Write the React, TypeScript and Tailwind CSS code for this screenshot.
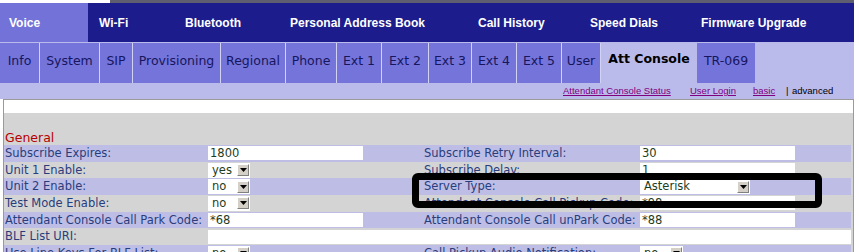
import React from 'react'

const navItems = [
    { label: 'Voice', cls: 'w-[88px] pl-[9px] bg-[#7272d8]' },
    { label: 'Wi-Fi', cls: 'w-[97px] pl-[11px]' },
    { label: 'Bluetooth', cls: 'w-[105px]' },
    { label: 'Personal Address Book', cls: 'w-[188px]' },
    { label: 'Call History', cls: 'w-[112px]' },
    { label: 'Speed Dials', cls: 'w-[111px]' },
    { label: 'Firmware Upgrade', cls: 'flex-1' },
]

const subTabs = [
    { label: 'Info', cls: 'w-[40px]' },
    { label: 'System', cls: 'w-[60px]' },
    { label: 'SIP', cls: 'w-[33px]' },
    { label: 'Provisioning', cls: 'w-[88px]' },
    { label: 'Regional', cls: 'w-[65px]' },
    { label: 'Phone', cls: 'w-[51px]' },
    { label: 'Ext 1', cls: 'w-[45px]' },
    { label: 'Ext 2', cls: 'w-[47px]' },
    { label: 'Ext 3', cls: 'w-[43px]' },
    { label: 'Ext 4', cls: 'w-[45px]' },
    { label: 'Ext 5', cls: 'w-[45px]' },
    { label: 'User', cls: 'w-[39px]' },
]

const DropBtn = () => (
    <div className="w-[12px] h-[12px] bg-[#d4d0c8] border-t border-l border-t-white border-l-white border-b border-r border-b-[#808080] border-r-[#808080] flex items-center justify-center">
        <svg width="7" height="4" viewBox="0 0 7 4">
            <path d="M0 0h7L3.5 4z" fill="#000" />
        </svg>
    </div>
)

const Select = ({ value, width }: { value: string; width: string }) => (
    <div className={`${width} h-[15px] bg-white flex items-center justify-between pl-[4px] pr-[1px] text-[#1e3c1e]`}>
        <span>{value}</span>
        <DropBtn />
    </div>
)

const Field = ({ value, wide }: { value: string; wide?: boolean }) => (
    <div className={`${wide ? 'w-full' : 'w-[155px]'} h-[14px] bg-white pl-[2px] leading-[14px] text-[#1e3c1e]`}>
        {value}
    </div>
)

const Row = ({ odd, children }: { odd: boolean; children: React.ReactNode }) => (
    <div className={`grid grid-cols-[204px_213px_219px_1fr] h-[16.7px] items-center leading-[16.7px] ${odd ? 'bg-[#bdbde6]' : ''}`}>
        {children}
    </div>
)

const Label = ({ children, right }: { children: React.ReactNode; right?: boolean }) => (
    <div className={`${right ? 'pl-[3px]' : 'pl-[1px]'} whitespace-nowrap text-[#293d7d]`}>{children}</div>
)

export default function App() {
    return (
        <div className="relative w-[859px] h-[252px] overflow-hidden bg-white font-['DejaVu_Sans',Verdana,sans-serif]">
            <div className="w-[854px]">
                <div className="flex h-[3px]">
                    <div className="w-[110px] bg-white" />
                    <div className="flex-1 bg-[#5e5e70]" />
                </div>

                <div className="flex h-[39px] bg-[#1c1c8c] text-white font-bold text-[12px] font-['Liberation_Sans',Arial,sans-serif]">
                    {navItems.map((n) => (
                        <div key={n.label} className={`${n.cls} h-full flex items-center whitespace-nowrap`}>
                            {n.label}
                        </div>
                    ))}
                </div>

                <div className="bg-[#bbbbeb] pt-[1px]">
                    <div className="flex h-[40px] text-[12.5px] text-[#16165e]">
                        {subTabs.map((t) => (
                            <div key={t.label} className={`${t.cls} h-full bg-[#7474da] border-r border-r-[#d2d2f4] flex items-center justify-center pb-[4px] whitespace-nowrap`}>
                                {t.label}
                            </div>
                        ))}
                        <div className="w-[96px] h-full flex items-center justify-center pb-[8px] font-bold text-black whitespace-nowrap">
                            Att Console
                        </div>
                        <div className="w-[58px] h-full bg-[#7474da] flex items-center justify-center pb-[4px]">TR-069</div>
                    </div>
                    <div className="flex h-[16px] items-center text-[9.5px] font-['Liberation_Sans',Arial,sans-serif] pl-[563px]">
                        <a className="w-[127px] text-[#80007f] underline">Attendant Console Status</a>
                        <a className="w-[63px] text-[#80007f] underline">User Login</a>
                        <a className="w-[33px] text-[#80007f] underline">basic</a>
                        <span className="w-[6px] text-black">|</span>
                        <span className="text-black">advanced</span>
                    </div>
                </div>

                <div className="ml-[3px] w-[851px] border-t border-l border-r border-[#9a9a9a]">
                    <div className="h-[13px] bg-white" />
                    <div className="bg-[#d4d4d4] pr-[2px] text-[11.5px]">
                        <div className="h-[32px] pt-[17px] pl-[1px] leading-[15px] text-[12.5px] text-[#b40000]">General</div>

                        <Row odd>
                            <Label>Subscribe Expires:</Label>
                            <Field value="1800" />
                            <Label right>Subscribe Retry Interval:</Label>
                            <Field value="30" />
                        </Row>
                        <Row odd={false}>
                            <Label>Unit 1 Enable:</Label>
                            <Select value="yes" width="w-[42px]" />
                            <Label right>Subscribe Delay:</Label>
                            <Field value="1" />
                        </Row>
                        <Row odd>
                            <Label>Unit 2 Enable:</Label>
                            <Select value="no" width="w-[42px]" />
                            <Label right>Server Type:</Label>
                            <Select value="Asterisk" width="w-[110px]" />
                        </Row>
                        <Row odd={false}>
                            <Label>Test Mode Enable:</Label>
                            <Select value="no" width="w-[42px]" />
                            <Label right>Attendant Console Call Pickup Code:</Label>
                            <Field value="*98" />
                        </Row>
                        <Row odd>
                            <Label>Attendant Console Call Park Code:</Label>
                            <Field value="*68" />
                            <Label right>Attendant Console Call unPark Code:</Label>
                            <Field value="*88" />
                        </Row>
                        <div className="grid grid-cols-[204px_1fr] h-[16.7px] items-center leading-[16.7px]">
                            <Label>BLF List URI:</Label>
                            <Field value="" wide />
                        </div>
                        <Row odd>
                            <Label>Use Line Keys For BLF List:</Label>
                            <Select value="no" width="w-[42px]" />
                            <Label right>Call Pickup Audio Notification:</Label>
                            <Select value="no" width="w-[43px]" />
                        </Row>
                        <div className="h-[20px]" />
                    </div>
                </div>
            </div>

            <div className="absolute left-[412px] top-[173px] w-[410px] h-[35px] border-[7px] border-black rounded-[6px]" />
        </div>
    )
}
